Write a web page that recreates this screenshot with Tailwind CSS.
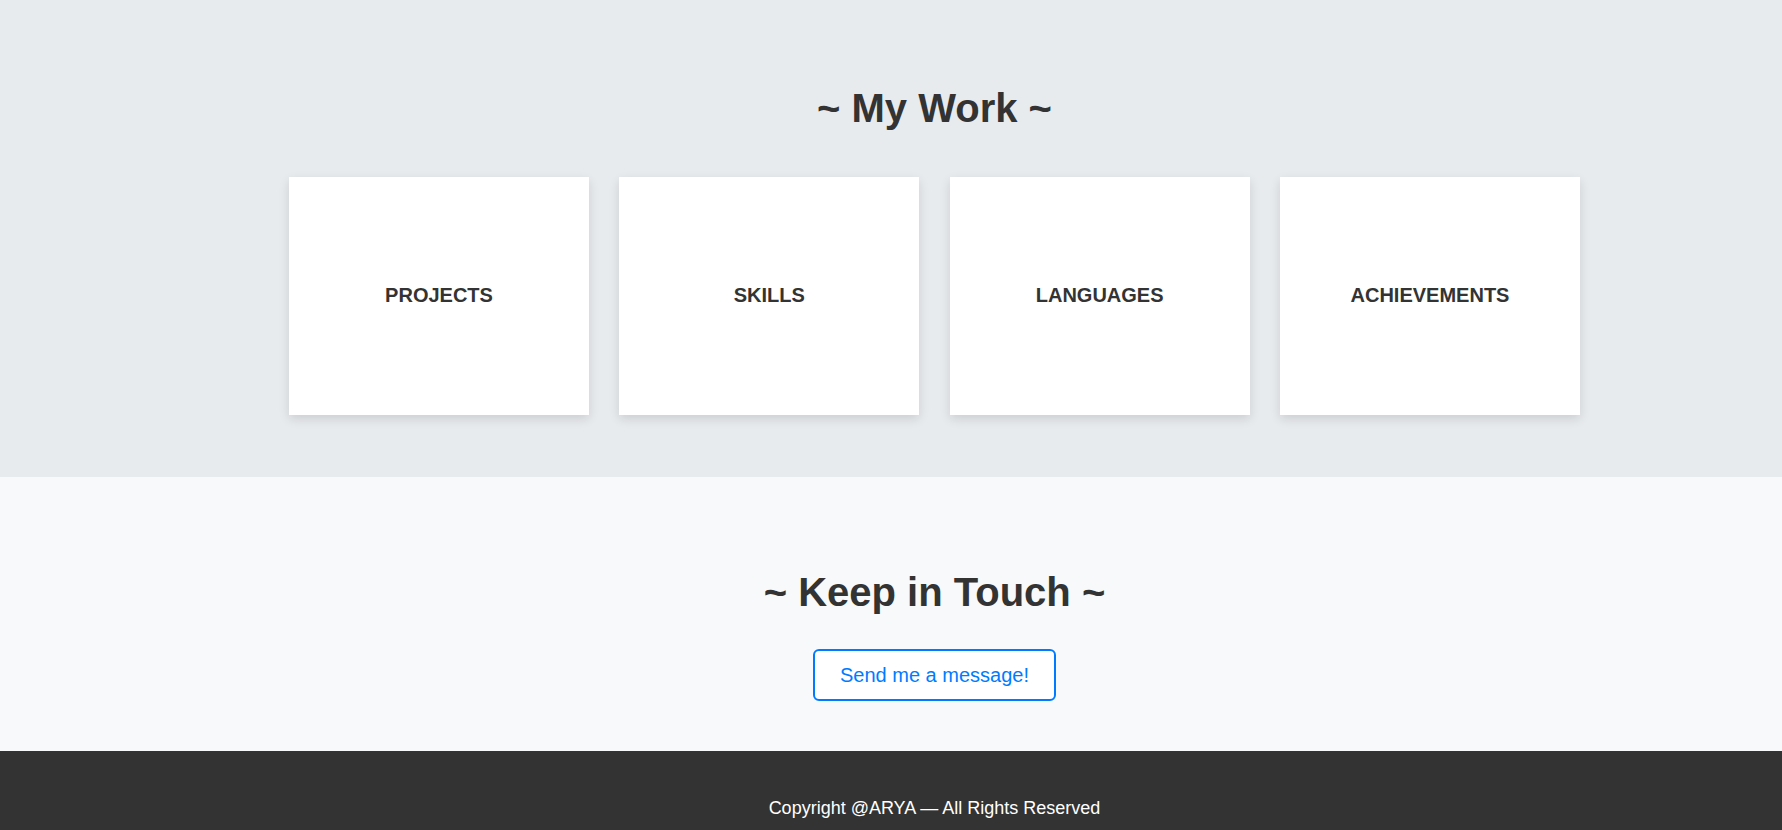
<!DOCTYPE html>
<html lang="en">
<head>
<meta charset="utf-8">
<title>Portfolio</title>
<script src="https://cdn.jsdelivr.net/npm/@tailwindcss/browser@4"></script>
</head>
<body class="flex min-h-screen flex-col overflow-x-hidden bg-[#333333] font-['Liberation_Sans',Arial,sans-serif] text-[#333333]">
<section class="bg-[#e8ebee] pt-20 pr-[79px] pb-[62px] pl-[166px]">
  <h2 class="mb-[41px] text-center text-[40px] leading-14 font-bold">~ My Work ~</h2>
  <div class="mx-auto flex max-w-[1291px] flex-wrap justify-between gap-y-[30px]">
    <a href="#projects" class="flex h-[238px] w-[300px] items-center justify-center bg-white pb-0.5 text-xl font-bold shadow-[0_4px_10px_rgba(0,0,0,0.12)]">PROJECTS</a>
    <a href="#skills" class="flex h-[238px] w-[300px] items-center justify-center bg-white pb-0.5 text-xl font-bold shadow-[0_4px_10px_rgba(0,0,0,0.12)]">SKILLS</a>
    <a href="#languages" class="flex h-[238px] w-[300px] items-center justify-center bg-white pb-0.5 text-xl font-bold shadow-[0_4px_10px_rgba(0,0,0,0.12)]">LANGUAGES</a>
    <a href="#achievements" class="flex h-[238px] w-[300px] items-center justify-center bg-white pb-0.5 text-xl font-bold shadow-[0_4px_10px_rgba(0,0,0,0.12)]">ACHIEVEMENTS</a>
  </div>
</section>
<section class="bg-[#f8f9fb] pt-[87px] pr-[79px] pb-[50px] pl-[166px] text-center">
  <h2 class="mb-[29px] text-[40px] leading-14 font-bold">~ Keep in Touch ~</h2>
  <button type="button" class="rounded-md border-2 border-[#007bff] bg-white px-[25px] py-2.5 text-xl leading-7 text-[#007bff]">Send me a message!</button>
</section>
<footer class="bg-[#333333] pt-[43px] pr-[79px] pl-[166px] text-center text-lg text-white">
  <p>Copyright @ARYA — All Rights Reserved</p>
</footer>
</body>
</html>
